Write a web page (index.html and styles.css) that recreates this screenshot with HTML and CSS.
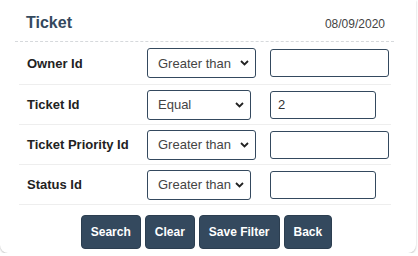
FILE: index.html
```html
<!DOCTYPE html>
<html lang="en">
<head>
  <meta charset="UTF-8" />
  <meta name="viewport" content="width=device-width, initial-scale=1.0"/>
  <title>Ticket - Filter</title>
  <link rel="stylesheet" href="styles.css">
</head>
<body>
  <div class="card">
    <div class="card-header">
      <h2>Ticket</h2>
      <span class="date">08/09/2020</span>
    </div>

    <div class="filters">
      <div class="row first">
        <label for="owner">Owner Id</label>
        <select class="op wide"><option>Greater than</option></select>
        <input id="owner" class="val wide" type="text" value="">
      </div>
      <div class="row">
        <label for="ticket">Ticket Id</label>
        <select class="op"><option>Equal</option></select>
        <input id="ticket" class="val" type="text" value="2">
      </div>
      <div class="row">
        <label for="priority">Ticket Priority Id</label>
        <select class="op wide"><option>Greater than</option></select>
        <input id="priority" class="val wide" type="text" value="">
      </div>
      <div class="row">
        <label for="status">Status Id</label>
        <select class="op"><option>Greater than</option></select>
        <input id="status" class="val" type="text" value="">
      </div>
    </div>

    <div class="actions">
      <button>Search</button>
      <button>Clear</button>
      <button>Save Filter</button>
      <button>Back</button>
    </div>
  </div>
</body>
</html>
```

FILE: styles.css
```css
body {
  margin: 0;
  background: #ffffff;
  font-family: "Liberation Sans", Arial, sans-serif;
  color: #222;
}
.card {
  width: 416px;
  height: 253px;
  box-sizing: border-box;
  background: #fff;
  border-radius: 0 0 8px 8px;
  box-shadow: 0 1px 2px rgba(0, 0, 0, 0.25);
  padding: 0 22px 0 15px;
}
.card-header {
  display: flex;
  justify-content: space-between;
  align-items: baseline;
  padding: 14px 9px 0 11px;
  height: 27px;
  border-bottom: 1px dashed #d6d9dc;
}
.card-header h2 {
  margin: 0;
  font-size: 16px;
  font-weight: bold;
  color: #34495e;
}
.date {
  font-size: 12px;
  color: #444;
}
.filters {
  margin: 0 3px 0 4px;
}
.row {
  display: flex;
  align-items: center;
  height: 39px;
  border-bottom: 1px solid #eeeeee;
  padding-left: 8px;
}
.row.first {
  height: 42px;
}
.row label {
  width: 120px;
  font-size: 13px;
  font-weight: bold;
  color: #222;
}
select.op {
  appearance: none;
  -webkit-appearance: none;
  width: 104px;
  height: 30px;
  margin-right: 19px;
  border: 1px solid #34495e;
  border-radius: 3px;
  background: #fff url("data:image/svg+xml,%3Csvg xmlns='http://www.w3.org/2000/svg' width='9' height='6' viewBox='0 0 9 6'%3E%3Cpath d='M1 1l3.5 3.5L8 1' fill='none' stroke='%23222' stroke-width='1.8'/%3E%3C/svg%3E") no-repeat right 6px center;
  font-family: "Liberation Sans", Arial, sans-serif;
  font-size: 13px;
  color: #444;
  padding: 0 18px 0 10px;
}
select.op.wide {
  width: 109px;
  margin-right: 14px;
}
input.val {
  width: 106px;
  height: 28px;
  box-sizing: border-box;
  border: 1px solid #34495e;
  border-radius: 3px;
  font-family: "Liberation Sans", Arial, sans-serif;
  font-size: 13px;
  color: #333;
  padding: 0 7px;
}
input.val.wide {
  width: 119px;
}
.actions {
  display: flex;
  justify-content: center;
  gap: 4px;
  padding-top: 10px;
  padding-left: 4px;
}
.actions button {
  height: 34px;
  padding: 0 9px;
  background: #34495e;
  border: 1px solid #2c3e50;
  border-radius: 4px;
  color: #fff;
  font-family: "Liberation Sans", Arial, sans-serif;
  font-size: 12px;
  font-weight: bold;
}
```
